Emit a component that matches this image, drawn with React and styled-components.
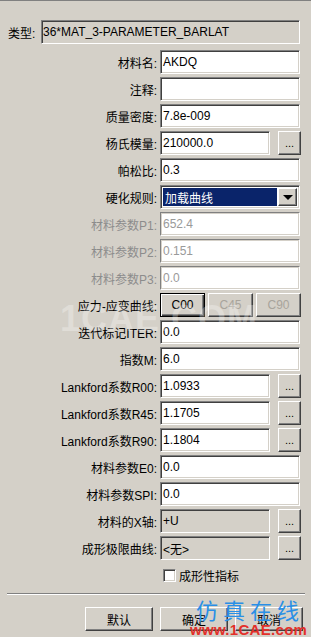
import React from "react";
import styled, { createGlobalStyle, css } from "styled-components";

const Global = createGlobalStyle`
  html, body { margin: 0; padding: 0; background: #d4d0c8; }
  * { box-sizing: border-box; }
`;

const FONT = `"Liberation Sans", Arial, "Noto Sans CJK SC", sans-serif`;

const Window = styled.div`
  position: relative;
  width: 311px;
  height: 637px;
  overflow: hidden;
  background: #d4d0c8;
  border-top: 1px solid #808080;
  padding-top: 19px;
  font-family: ${FONT};
  font-size: 12px;
  color: #000;
`;

const TypeRow = styled.div`
  display: flex;
  align-items: center;
  gap: 6px;
  padding-left: 8px;
  height: 24px;
`;

const TypeLabel = styled.span`
  width: 27px;
  white-space: nowrap;
`;

const sunken = css`
  border: 1px solid;
  border-color: #808080 #ffffff #ffffff #808080;
  box-shadow: inset 1px 1px #404040, inset -1px -1px #d4d0c8;
`;

const raised = css`
  background: #d4d0c8;
  border: 1px solid;
  border-color: #ffffff #404040 #404040 #ffffff;
  box-shadow: inset -1px -1px #808080;
`;

const Field = styled.div`
  ${sunken}
  display: flex;
  align-items: center;
  height: 24px;
  width: ${(p) => p.$width || 140}px;
  flex: 0 0 auto;
  padding: 0 2px 0 ${(p) => (p.$wide ? 1 : 2)}px;
  white-space: nowrap;
  overflow: hidden;
  background: ${(p) => (p.$readOnly ? "#d4d0c8" : "#ffffff")};
  color: #000;
  ${(p) =>
    p.$disabled &&
    css`
      color: #9a9a9a;
      box-shadow: inset 1px 1px #d4d0c8, inset -1px -1px #d4d0c8;
    `}
`;

const Form = styled.div`
  margin-top: 6px;
  display: flex;
  flex-direction: column;
  gap: 3px;
`;

const RowGrid = styled.div`
  display: grid;
  grid-template-columns: 157px auto;
  column-gap: 3px;
  align-items: center;
  height: 24px;
`;

const Label = styled.span`
  text-align: right;
  white-space: nowrap;
  color: ${(p) => (p.$disabled ? "#8c8c8c" : "#000")};
`;

const Inline = styled.div`
  display: flex;
  align-items: center;
  gap: 8px;
`;

const DotsButton = styled.div`
  ${raised}
  width: 23px;
  height: 24px;
  display: flex;
  align-items: flex-end;
  justify-content: center;
  padding-bottom: 5px;
  font-size: 11px;
  line-height: 1;
  letter-spacing: 0px;
`;

const Combo = styled.div`
  ${sunken}
  width: 140px;
  height: 24px;
  background: #fff;
  display: flex;
  align-items: stretch;
  padding: 2px;
  gap: 1px;
`;

const ComboValue = styled.div`
  flex: 1;
  background: #0a246a;
  color: #fff;
  display: flex;
  align-items: center;
  padding-left: 2px;
`;

const ComboButton = styled.div`
  ${raised}
  width: 19px;
  display: flex;
  align-items: center;
  justify-content: center;
`;

const Triangle = styled.span`
  width: 0;
  height: 0;
  border-left: 5px solid transparent;
  border-right: 5px solid transparent;
  border-top: 5px solid #000;
`;

const ToggleGroup = styled.div`
  display: grid;
  grid-template-columns: repeat(3, 45px);
  gap: 3px;
`;

const ToggleButton = styled.div`
  height: 24px;
  display: flex;
  align-items: center;
  justify-content: center;
  font-size: 12px;
  ${raised}
  color: ${(p) => (p.$disabled ? "#a8a49c" : "#000")};
  ${(p) =>
    p.$default &&
    css`
      border-color: #000;
      box-shadow: inset 1px 1px #ffffff, inset -1px -1px #404040,
        inset -2px -2px #808080;
    `}
`;

const CheckRow = styled.div`
  margin-top: 8px;
  padding-left: 163px;
  display: flex;
  align-items: center;
  gap: 3px;
  height: 14px;
`;

const CheckBox = styled.span`
  ${sunken}
  width: 13px;
  height: 13px;
  background: #fff;
`;

const Separator = styled.div`
  margin: 11px 6px 0 7px;
  border-top: 1px solid #808080;
  border-bottom: 1px solid #ffffff;
`;

const ButtonBar = styled.div`
  margin-top: 12px;
  display: flex;
  justify-content: flex-end;
  gap: 7px;
  padding-right: 8px;
`;

const DialogButton = styled.div`
  ${raised}
  width: 68px;
  height: 24px;
  display: flex;
  align-items: center;
  justify-content: center;
  font-size: 12px;
`;

const MarkCenter = styled.div`
  position: absolute;
  left: 60px;
  top: 297px;
  font-size: 36px;
  font-weight: bold;
  letter-spacing: 1px;
  color: rgba(255, 255, 255, 0.28);
  pointer-events: none;
  white-space: nowrap;
`;

const MarkTitle = styled.div`
  position: absolute;
  left: 196px;
  top: 592px;
  font-family: "Noto Sans CJK SC", sans-serif;
  font-size: 22px;
  letter-spacing: 5px;
  color: #2a8fe6;
  pointer-events: none;
  white-space: nowrap;
`;

const MarkUrl = styled.div`
  position: absolute;
  left: 190px;
  top: 620px;
  font-family: "Liberation Sans", Arial, sans-serif;
  font-size: 15px;
  font-weight: bold;
  letter-spacing: 0.3px;
  color: #e3302a;
  pointer-events: none;
  white-space: nowrap;
`;

function Row({ label, disabled, children }) {
  return (
    <RowGrid>
      <Label $disabled={disabled}>{label}</Label>
      {children}
    </RowGrid>
  );
}

function TextRow({ label, value, disabled, readOnly }) {
  return (
    <Row label={label} disabled={disabled}>
      <Field $disabled={disabled} $readOnly={readOnly}>
        {value}
      </Field>
    </Row>
  );
}

function ButtonRow({ label, value, readOnly }) {
  return (
    <Row label={label}>
      <Inline>
        <Field $width={110} $readOnly={readOnly}>
          {value}
        </Field>
        <DotsButton>...</DotsButton>
      </Inline>
    </Row>
  );
}

export default function App() {
  return (
    <>
      <Global />
      <Window>
        <TypeRow>
          <TypeLabel>类型:</TypeLabel>
          <Field $width={259} $readOnly $wide>
            36*MAT_3-PARAMETER_BARLAT
          </Field>
        </TypeRow>
        <Form>
          <TextRow label="材料名:" value="AKDQ" />
          <TextRow label="注释:" value="" />
          <TextRow label="质量密度:" value="7.8e-009" />
          <ButtonRow label="杨氏模量:" value="210000.0" />
          <TextRow label="帕松比:" value="0.3" />
          <Row label="硬化规则:">
            <Combo>
              <ComboValue>加载曲线</ComboValue>
              <ComboButton>
                <Triangle />
              </ComboButton>
            </Combo>
          </Row>
          <TextRow label="材料参数P1:" value="652.4" disabled />
          <TextRow label="材料参数P2:" value="0.151" disabled />
          <TextRow label="材料参数P3:" value="0.0" disabled />
          <Row label="应力-应变曲线:">
            <ToggleGroup>
              <ToggleButton $default>C00</ToggleButton>
              <ToggleButton $disabled>C45</ToggleButton>
              <ToggleButton $disabled>C90</ToggleButton>
            </ToggleGroup>
          </Row>
          <TextRow label="迭代标记ITER:" value="0.0" />
          <TextRow label="指数M:" value="6.0" />
          <ButtonRow label="Lankford系数R00:" value="1.0933" />
          <ButtonRow label="Lankford系数R45:" value="1.1705" />
          <ButtonRow label="Lankford系数R90:" value="1.1804" />
          <TextRow label="材料参数E0:" value="0.0" />
          <TextRow label="材料参数SPI:" value="0.0" />
          <ButtonRow label="材料的X轴:" value="+U" readOnly />
          <ButtonRow label="成形极限曲线:" value="<无>" readOnly />
        </Form>
        <CheckRow>
          <CheckBox />
          <span>成形性指标</span>
        </CheckRow>
        <Separator />
        <ButtonBar>
          <DialogButton>默认</DialogButton>
          <DialogButton>确定</DialogButton>
          <DialogButton>取消</DialogButton>
        </ButtonBar>
        <MarkCenter>1CAE.COM</MarkCenter>
        <MarkTitle>仿真在线</MarkTitle>
        <MarkUrl>www.1CAE.com</MarkUrl>
      </Window>
    </>
  );
}
